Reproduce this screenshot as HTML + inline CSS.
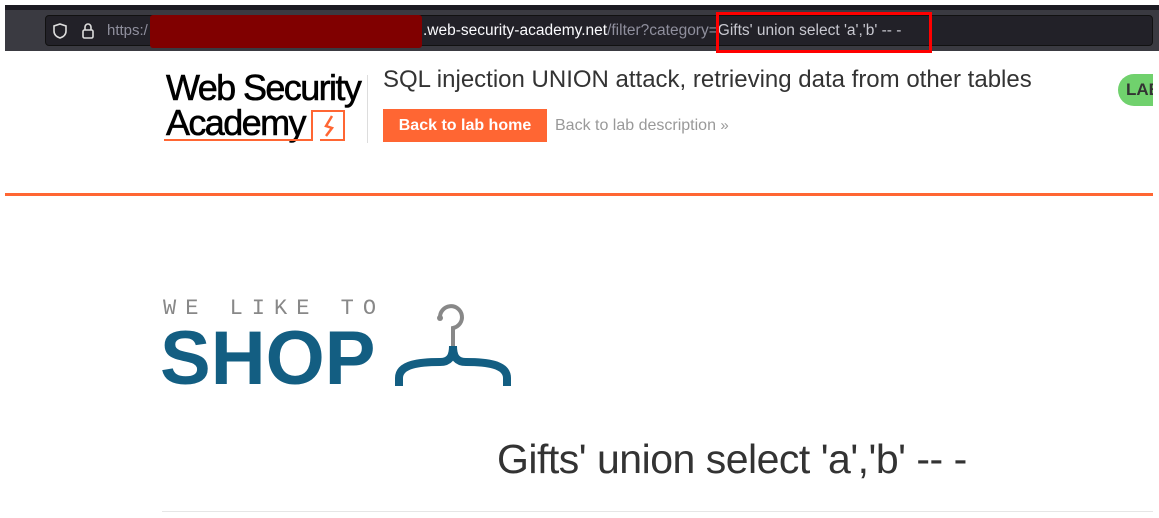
<!DOCTYPE html>
<html><head><meta charset="utf-8"><style>
*{margin:0;padding:0;box-sizing:border-box}
body{width:1159px;height:518px;background:#fff;position:relative;overflow:hidden;font-family:"Liberation Sans",sans-serif}
.a{position:absolute}
</style></head><body>
<div class="a" style="left:5px;top:5px;width:1154px;height:5px;background:#1c1b22"></div>
<div class="a" style="left:5px;top:10px;width:1154px;height:41px;background:#3a3a41"></div>
<div class="a" style="left:45px;top:15px;width:1108px;height:31px;background:#222128;border:1px solid #111;border-radius:4px"></div>
<svg class="a" style="left:53px;top:23px" width="14" height="16" viewBox="0 0 14 16"><path d="M7 1 L13 3 V8 C13 12 10 14 7 15 C4 14 1 12 1 8 V3 Z" fill="none" stroke="#ddd" stroke-width="1.6"/></svg>
<svg class="a" style="left:81px;top:22px" width="14" height="18" viewBox="0 0 14 18"><path d="M4 8 V5 A3 3 0 0 1 10 5 V8" fill="none" stroke="#ddd" stroke-width="1.6"/><rect x="2" y="8" width="10" height="8" rx="1.5" fill="none" stroke="#ddd" stroke-width="1.6"/></svg>
<div class="a" style="left:107px;top:22px;font-size:15px;color:#8f8f9d;white-space:nowrap">https:/</div>
<div class="a" style="left:150px;top:15px;width:272px;height:33px;background:#800000;border-radius:3px"></div>
<div class="a" style="left:423px;top:22px;font-size:15.5px;color:#fbfbfe;white-space:nowrap">.web-security-academy.net<span style="color:#8f8f9d">/filter?category=</span><span style="color:#c8c8d0">Gifts' union select 'a','b' -- -</span></div>
<div class="a" style="left:716px;top:12px;width:216px;height:41px;border:3px solid #f00"></div>

<div class="a" style="left:166px;top:70px;font-size:36px;letter-spacing:-1.6px;line-height:35px;color:#000;-webkit-text-stroke:0.6px #000">Web Security<br>Academy</div>
<svg class="a" style="left:160px;top:108px" width="190" height="36" viewBox="0 0 190 36"><path d="M4 32 L152 32 V3 H184 V32 H160" fill="none" stroke="#ff6633" stroke-width="2"/><path d="M172 8 L166 18 L172 20 L166 28" fill="none" stroke="#ff6633" stroke-width="2.5"/></svg>
<div class="a" style="left:367px;top:75px;width:1px;height:68px;background:#ddd"></div>
<div class="a" style="left:383px;top:66px;font-size:24px;color:#333;white-space:nowrap">SQL injection UNION attack, retrieving data from other tables</div>
<div class="a" style="left:383px;top:109px;width:164px;height:33px;background:#ff6633;color:#fff;font-weight:bold;font-size:16px;line-height:33px;text-align:center">Back to lab home</div>
<div class="a" style="left:555px;top:117px;font-size:16px;color:#999;white-space:nowrap">Back to lab description <span style="font-size:15px">&#187;</span></div>
<div class="a" style="left:1118px;top:74px;width:60px;height:32px;background:#70d16d;border-radius:16px;font-weight:bold;color:#333;font-size:17px;line-height:32px;padding-left:8px">LAB</div>
<div class="a" style="left:1153px;top:51px;width:6px;height:467px;background:#fff"></div>
<div class="a" style="left:5px;top:193px;width:1148px;height:3px;background:#ff6633"></div>

<div class="a" style="left:163px;top:296px;font-family:'Liberation Mono',monospace;font-size:22px;letter-spacing:9px;color:#888;white-space:nowrap">WE LIKE TO</div>
<div class="a" style="left:160px;top:319px;font-size:76px;font-weight:bold;color:#135e82;letter-spacing:0;line-height:80px">SHOP</div>
<svg class="a" style="left:395px;top:298px" width="120" height="92" viewBox="0 0 120 92"><path d="M45 20 A11 11 0 1 1 58 30 V50" fill="none" stroke="#888" stroke-width="4"/><circle cx="45" cy="20" r="3" fill="#888"/><path d="M4 88 V80 C4 66 25 64 45 64 C55 64 58 58 58 48 C58 58 61 64 71 64 C91 64 112 66 112 80 V88" fill="none" stroke="#135e82" stroke-width="8"/></svg>

<div class="a" style="left:497px;top:436px;font-size:41px;color:#333;white-space:nowrap;letter-spacing:-0.5px">Gifts' union select 'a','b' -- -</div>
<div class="a" style="left:162px;top:511px;width:991px;height:1px;background:#e6e6e6"></div>
</body></html>
